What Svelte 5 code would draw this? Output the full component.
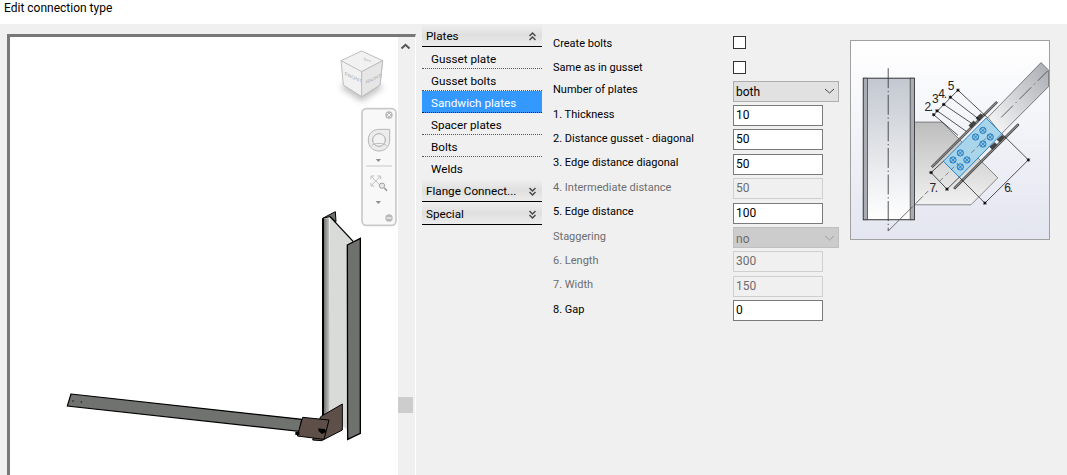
<script>
	const sections = ['Gusset plate', 'Gusset bolts', 'Sandwich plates', 'Spacer plates', 'Bolts', 'Welds'];
	const rows = [
		{ label: 'Create bolts', type: 'check' },
		{ label: 'Same as in gusset', type: 'check' },
		{ label: 'Number of plates', type: 'select', value: 'both' },
		{ label: '1. Thickness', type: 'input', value: '10' },
		{ label: '2. Distance gusset - diagonal', type: 'input', value: '50' },
		{ label: '3. Edge distance diagonal', type: 'input', value: '50' },
		{ label: '4. Intermediate distance', type: 'input', value: '50', off: true },
		{ label: '5. Edge distance', type: 'input', value: '100' },
		{ label: 'Staggering', type: 'select', value: 'no', off: true },
		{ label: '6. Length', type: 'input', value: '300', off: true },
		{ label: '7. Width', type: 'input', value: '150', off: true },
		{ label: '8. Gap', type: 'input', value: '0' }
	];
	const boltGroups = [
		[393, 307], [415, 287], [437, 307], [415, 328],
		[347, 355], [325, 376], [367, 376], [347, 397]
	];
</script>

{#snippet chevrons(up)}
	<svg class="chev" width="9" height="9" viewBox="0 0 9 9">
		{#if up}
			<path d="M1.5 4 4.5 1 7.5 4M1.5 8 4.5 5 7.5 8" />
		{:else}
			<path d="M1.5 1 4.5 4 7.5 1M1.5 5 4.5 8 7.5 5" />
		{/if}
	</svg>
{/snippet}

<div class="dialog">
	<header class="title">Edit connection type</header>

	<div class="body">
		<section class="viewport">
			<div class="canvas">
				<svg class="model" viewBox="30 111 1164 1314" width="388" height="438">
					<defs>
						<filter id="cubeShadow" x="-40%" y="-40%" width="180%" height="180%">
							<feGaussianBlur stdDeviation="9" />
						</filter>
						<linearGradient id="flangeIn" x1="0" x2="1" y1="0" y2="0">
							<stop offset="0" stop-color="#5f615f" />
							<stop offset="1" stop-color="#c4c6c3" />
						</linearGradient>
					</defs>

					<!-- view cube -->
					<path d="M1085 225 1150 262 1085 304 1020 262Z" fill="#8a8a8a" opacity="0.55" filter="url(#cubeShadow)" />
					<path d="M1085 153 1148 182 1140 255 1085 290 1030 255 1023 182Z" fill="#f1f1f1" stroke="#bdbdbd" stroke-width="3" />
					<path d="M1023 182 1085 215 1148 182M1085 215V290" fill="none" stroke="#bdbdbd" stroke-width="3" />
					<path d="M1085 215 1148 182 1140 255 1085 290Z" fill="#e6e6e6" stroke="#bdbdbd" stroke-width="3" />
					<text class="cube" transform="matrix(1 0.45 0 1 1034 226)">FRONT</text>
					<text class="cube" transform="matrix(1 -0.45 0 1 1097 252)">RIGHT</text>
					<text class="cube" transform="matrix(0.8 0.35 -0.8 0.35 1083 176)">TOP</text>

					<!-- navigation bar -->
					<rect x="1086" y="326" width="102" height="350" rx="13" fill="#f8f8f8" stroke="#c9c9c9" stroke-width="5" />
					<circle cx="1167" cy="345" r="11" fill="#b9b9b9" />
					<path d="M1161 339 1173 351M1173 339 1161 351" stroke="#f4f4f4" stroke-width="3" />
					<path d="M1105 420C1105 398 1120 388 1140 388H1169V420C1169 440 1155 453 1137 453 1118 453 1105 440 1105 420Z" fill="#ececec" stroke="#b5b5b5" stroke-width="3" />
					<circle cx="1137" cy="420" r="19" fill="#f2f2f2" stroke="#a9a9a9" stroke-width="3" />
					<path d="M1115 437C1122 428 1152 428 1160 437" fill="none" stroke="#bdbdbd" stroke-width="3" />
					<path d="M1127 477H1143L1135 486Z" fill="#8e8e8e" />
					<path d="M1098 498H1176" stroke="#c8c8c8" stroke-width="3" />
					<path d="M1115 530 1140 556M1140 530 1115 556M1113 538V528H1123M1132 528H1142V538M1113 548V558H1123" fill="none" stroke="#c0c0c0" stroke-width="3" />
					<circle cx="1146" cy="557" r="8" fill="#e8e8e8" stroke="#a0a0a0" stroke-width="3" />
					<path d="M1153 564 1161 572" stroke="#8c8c8c" stroke-width="4" />
					<path d="M1127 603H1143L1135 612Z" fill="#8e8e8e" />
					<circle cx="1167" cy="654" r="11" fill="#b9b9b9" />
					<path d="M1160 654H1174" stroke="#f4f4f4" stroke-width="4" />

					<!-- column -->
					<path d="M990 650 1060 725 1042 735V1290L985 1240Z" fill="#d9dbd8" />
					<path d="M968 655 1006 635 1008 665 990 650Z" fill="#6f716e" stroke="#000" stroke-width="3" />
					<path d="M990 650 1060 725" stroke="#000" stroke-width="4" fill="none" />
					<rect x="968" y="655" width="20" height="600" fill="url(#flangeIn)" />
					<path d="M969 655V1255" stroke="#000" stroke-width="6" />
					<path d="M1042 735 1081 715V1300L1043 1318Z" fill="#6f716e" stroke="#000" stroke-width="4" />

					<!-- diagonal -->
					<path d="M213 1182 905 1258 898 1294 202 1218Z" fill="#70726f" stroke="#000" stroke-width="3.5" />
					<path d="M217 1203h4M242 1206h4" stroke="#000" stroke-width="3" />

					<!-- connection -->
					<path d="M962 1250 1027 1212V1290L965 1322 938 1320 950 1280Z" fill="#5e5048" stroke="#000" stroke-width="3" />
					<path d="M908 1252 987 1260 972 1318 892 1308Z" fill="#5e5048" stroke="#000" stroke-width="3" />
					<path d="M955 1285 976 1288 978 1296 966 1302 956 1294Z" fill="#000" />
					<path d="M886 1295h12v10h-12z" fill="#000" />
				</svg>
			</div>
			<div class="scrollbar">
				<svg class="arrow" width="11" height="7" viewBox="0 0 11 7"><path d="M1.5 5.5 5.5 1.8 9.5 5.5" /></svg>
				<div class="thumb"></div>
			</div>
		</section>

		<nav class="accordion">
			<div class="group">Plates {@render chevrons(true)}</div>
			{#each sections as s, i}
				<div class="item" class:active={s === 'Sandwich plates'} class:last={i === sections.length - 1}>{s}</div>
			{/each}
			<div class="group"><span>Flange Connect...</span> {@render chevrons(false)}</div>
			<div class="group">Special {@render chevrons(false)}</div>
		</nav>

		<form class="form">
			{#each rows as row}
				<span class="label" class:off={row.off} class:plain={row.type === 'check'}>{row.label}</span>
				{#if row.type === 'check'}
					<span class="check"></span>
				{:else if row.type === 'select'}
					<span class="select" class:off={row.off}>
						<span class="value">{row.value}</span>
						<svg width="11" height="6" viewBox="0 0 11 6"><path d="M1 1 5.5 5 10 1" /></svg>
					</span>
				{:else}
					<span class="input" class:off={row.off}>{row.value}</span>
				{/if}
			{/each}
		</form>

		<figure class="diagram">
			<svg viewBox="18 18 596 596" width="198" height="198">
				<defs>
					<linearGradient id="bgGrad" x1="0" x2="0" y1="0" y2="1">
						<stop offset="0" stop-color="#fff" />
						<stop offset="1" stop-color="#e3e5f0" />
					</linearGradient>
					<linearGradient id="colGrad" x1="0" x2="0" y1="0" y2="1">
						<stop offset="0" stop-color="#c3c8d0" />
						<stop offset="1" stop-color="#fff" />
					</linearGradient>
					<linearGradient id="plateGrad" x1="0" x2="0" y1="0" y2="1">
						<stop offset="0" stop-color="#bdbdbd" />
						<stop offset="1" stop-color="#f1f1f1" />
					</linearGradient>
					<linearGradient id="braceGrad" x1="0" x2="1" y1="1" y2="0">
						<stop offset="0" stop-color="#fbfbfb" />
						<stop offset="1" stop-color="#a9acb2" />
					</linearGradient>
				</defs>
				<rect x="18" y="18" width="596" height="596" fill="url(#bgGrad)" />

				<!-- gusset -->
				<path d="M209 262H292L460 430 379 511H209Z" fill="url(#plateGrad)" stroke="#555" stroke-width="2" />

				<!-- column -->
				<rect x="55" y="130" width="154" height="426" fill="url(#colGrad)" stroke="#333" stroke-width="3" />
				<rect x="55" y="130" width="13" height="426" fill="#a9acb2" stroke="#333" stroke-width="2" />
				<rect x="196" y="130" width="13" height="426" fill="#a9acb2" stroke="#333" stroke-width="2" />
				<path d="M130 100V590" stroke="#333" stroke-width="2.5" stroke-dasharray="60 8 4 8" />
				<path d="M130 590 204 516" stroke="#555" stroke-width="2.5" />
				<path d="M212 508 250 470" stroke="#555" stroke-width="2.5" stroke-dasharray="32 8" />

				<!-- diagonal -->
				<path d="M430 248 590 83 613 106V155L470 298Z" fill="url(#braceGrad)" stroke="#666" stroke-width="2.5" />
				<path d="M470 248 610 108" stroke="#444" stroke-width="2.5" stroke-dasharray="50 12 4 12" />

				<!-- sandwich plate -->
				<path d="M425 250 472 297 344 428 296 380Z" fill="#a9d5ea" stroke="#0e6fc0" stroke-width="2.5" />
				<path d="M380 355 440 295M285 440 340 385" stroke="#555" stroke-width="2" stroke-dasharray="14 10" />
				<path d="M260 395 455 200 459 204 264 399Z" fill="#8a8a8a" stroke="#444" stroke-width="3" />
				<path d="M327 460 520 267 524 271 331 464Z" fill="#8a8a8a" stroke="#444" stroke-width="3" />
				<path d="M394 250l15 -13 6 6 -13 15zM373 272l14 -13 6 6 -13 14zM458 315l15 -13 6 6 -13 14zM436 337l15 -13 6 6 -13 14z" fill="#444" stroke="#222" stroke-width="2" />
				{#each boltGroups as b}
					<circle cx={b[0]} cy={b[1]} r="9.5" fill="#8fc3de" stroke="#0e6fc0" stroke-width="2.5" />
					<path d="M{b[0] - 7} {b[1] - 7}l14 14M{b[0] + 7} {b[1] - 7}l-14 14" stroke="#0e6fc0" stroke-width="2" />
				{/each}

				<!-- dimensions -->
				<g stroke="#000" stroke-width="2" fill="none">
					<path d="M267 240 340 302M277 228 365 290M297 209 380 265M317 187 405 255M340 166 430 250" />
					<path d="M267 240 340 166" />
					<path d="M552 376 421 506M472 297 552 376M344 428 421 506" />
					<path d="M259 414 307 464M259 414 296 380M307 464 344 428" />
				</g>
				<g stroke="#000" stroke-width="2.5">
					{#each [[267, 240], [277, 228], [297, 209], [317, 187], [340, 166], [552, 376], [421, 506], [259, 414], [307, 464]] as m}
						<path d="M{m[0] - 5} {m[1]}h10M{m[0]} {m[1] - 5}v10M{m[0] - 4} {m[1] - 4}l8 8M{m[0] + 4} {m[1] - 4}l-8 8" />
					{/each}
				</g>
				<g class="dims">
					<text x="239" y="228">2.</text>
					<text x="262" y="206">3</text>
					<text x="281" y="189">4.</text>
					<text x="309" y="167">5</text>
					<text x="254" y="474">7.</text>
					<text x="479" y="474">6.</text>
				</g>
			</svg>
		</figure>
	</div>
</div>

<style>
	:global(body) {
		margin: 0;
		background: #f0f0f0;
	}

	.dialog {
		width: 1067px;
		height: 475px;
		overflow: hidden;
		background: #f0f0f0;
		font-family: Roboto, 'Noto Sans', sans-serif;
		font-size: 12px;
		color: #000;
	}

	.title {
		height: 24px;
		padding: 0 0 0 4px;
		background: #fff;
		line-height: 17px;
	}

	.body {
		display: flex;
		align-items: flex-start;
	}

	.viewport {
		display: flex;
		box-sizing: border-box;
		flex: none;
		width: 409px;
		height: 460px;
		margin: 10px 0 0 7px;
		border-top: 3px solid #787878;
		border-left: 3px solid #787878;
		border-right: 1px solid #fff;
	}

	.canvas {
		width: 388px;
		background: #fff;
	}

	.model {
		display: block;
	}

	.cube {
		font-size: 15px;
		fill: #a8a8a8;
		font-family: 'Liberation Sans', sans-serif;
	}

	.scrollbar {
		position: relative;
		flex: 1;
		background: #f0f0f0;
	}

	.arrow {
		display: block;
		margin: 6px 0 0 2px;
	}

	.arrow path {
		fill: none;
		stroke: #555;
		stroke-width: 2;
	}

	.thumb {
		position: absolute;
		left: 0;
		right: 2px;
		top: 360px;
		height: 16px;
		background: #cdcdcd;
	}

	.accordion {
		flex: none;
		width: 120px;
		margin-left: 6px;
		font-size: 11.7px;
	}

	.group {
		display: flex;
		align-items: center;
		justify-content: space-between;
		box-sizing: border-box;
		height: 23px;
		padding: 2px 5px 0 4px;
		border-bottom: 1px solid #000;
		background: linear-gradient(#f0f0f0, #dfdfdf 50%, #ececec);
	}

	.chev {
		fill: none;
		stroke: #444;
		stroke-width: 1.4;
	}

	.item {
		box-sizing: border-box;
		height: 22px;
		padding: 0 0 0 9px;
		line-height: 25px;
		border-bottom: 1px dotted #555;
	}

	.item.active {
		background: #3399ff;
		color: #fff;
		border-bottom-color: #123;
	}

	.item.last {
		border-bottom: 0;
	}

	.form {
		flex: none;
		display: grid;
		grid-template-columns: 180px 106px;
		grid-template-rows: 25px 24px repeat(10, 24.4px);
		align-items: center;
		width: 286px;
		margin: 6px 0 0 11px;
	}

	.label {
		padding-bottom: 3px;
		font-size: 11px;
	}

	.label.plain {
		padding: 1px 0 0;
	}

	.label.off {
		color: #6d6d6d;
	}

	.check {
		display: block;
		box-sizing: border-box;
		width: 13px;
		height: 13px;
		border: 1px solid #333;
		background: #fff;
	}

	.input {
		box-sizing: border-box;
		display: block;
		width: 90px;
		height: 21px;
		padding-left: 2px;
		line-height: 19px;
		border: 1px solid #7a7a7a;
		background: #fff;
	}

	.input.off {
		border-color: #cfcfcf;
		background: #f0f0f0;
		color: #6d6d6d;
	}

	.select {
		box-sizing: border-box;
		display: flex;
		align-items: center;
		justify-content: space-between;
		height: 21px;
		padding: 0 3px 0 2px;
		border: 1px solid #adadad;
		background: #e1e1e1;
	}

	.select .value {
		padding-top: 2px;
	}

	.select svg {
		fill: none;
		stroke: #444;
		stroke-width: 1;
	}

	.select.off {
		background: #cccccc;
		border-color: #bfbfbf;
		color: #6d6d6d;
	}

	.select.off svg {
		stroke: #a0a0a0;
	}

	.diagram {
		flex: none;
		box-sizing: border-box;
		width: 200px;
		height: 200px;
		margin: 16px 0 0 11px;
		border: 1px solid #a0a0a0;
	}

	.diagram svg {
		display: block;
	}

	.dims {
		font-family: 'Liberation Sans', sans-serif;
		font-size: 36px;
		letter-spacing: -4px;
		fill: #222;
	}
</style>
